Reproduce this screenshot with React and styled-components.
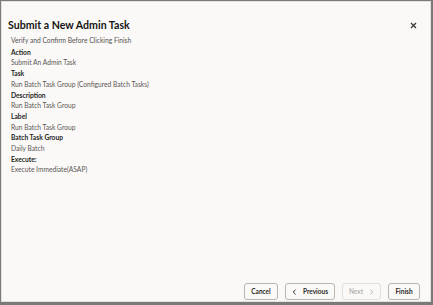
import React from "react";
import styled, { createGlobalStyle } from "styled-components";

const GlobalStyle = createGlobalStyle`
  html, body {
    margin: 0;
    padding: 0;
    background: #7a7a7a;
  }
  body {
    font-family: Lato, "Open Sans", Arial, sans-serif;
  }
`;

const Dialog = styled.div`
  box-sizing: border-box;
  margin: 1px 2px 0 1px;
  width: 430px;
  height: 301px;
  background: #faf9f8;
  border: 1px solid #e4e2df;
  display: flex;
  flex-direction: column;
`;

const Header = styled.div`
  display: flex;
  align-items: center;
  justify-content: space-between;
  padding: 16px 12px 0 6px;
`;

const Title = styled.h1`
  margin: 0;
  font-size: 10.6px;
  line-height: 14px;
  font-weight: 700;
  color: #161513;
`;

const CloseButton = styled.button`
  border: none;
  background: transparent;
  padding: 0;
  width: 10px;
  height: 10px;
  display: flex;
  align-items: center;
  justify-content: center;
  cursor: pointer;
`;

const Body = styled.div`
  flex: 1;
  padding: 3px 10px 0 9px;
  font-size: 6.7px;
  line-height: 10.7px;
`;

const Intro = styled.div`
  color: #55524e;
  margin-bottom: 1px;
`;

const Label = styled.div`
  font-weight: 700;
  color: #1f1e1c;
`;

const Value = styled.div`
  color: #5a5753;
`;

const Footer = styled.div`
  display: flex;
  justify-content: flex-end;
  gap: 7px;
  padding: 0 10px 1px 0;
`;

const Button = styled.button`
  box-sizing: border-box;
  height: 17px;
  width: ${(p) => p.w}px;
  padding: 0;
  border: 1px solid ${(p) => (p.disabled ? "#e2e0dd" : "#b9b6b2")};
  border-radius: 3px;
  background: #faf9f8;
  color: ${(p) => (p.disabled ? "#b6b3af" : "#2b2a28")};
  font-family: inherit;
  font-size: 6.5px;
  font-weight: 700;
  display: flex;
  align-items: center;
  justify-content: center;
  gap: ${(p) => p.gap || 0}px;
`;

const Chevron = ({ dir, color }) => (
  <svg width="5" height="6" viewBox="0 0 5 6">
    <path
      d={dir === "left" ? "M3.6 0.6 L1.2 3 L3.6 5.4" : "M1.4 0.6 L3.8 3 L1.4 5.4"}
      fill="none"
      stroke={color}
      strokeWidth="1"
    />
  </svg>
);

const rows = [
  ["Action", "Submit An Admin Task"],
  ["Task", "Run Batch Task Group (Configured Batch Tasks)"],
  ["Description", "Run Batch Task Group"],
  ["Label", "Run Batch Task Group"],
  ["Batch Task Group", "Daily Batch"],
  ["Execute:", "Execute Immediate(ASAP)"],
];

export default function App() {
  return (
    <>
      <GlobalStyle />
      <Dialog>
        <Header>
          <Title>Submit a New Admin Task</Title>
          <CloseButton aria-label="Close">
            <svg width="7" height="7" viewBox="0 0 7 7">
              <path d="M1 1 L6 6 M6 1 L1 6" stroke="#3a3936" strokeWidth="1.3" />
            </svg>
          </CloseButton>
        </Header>
        <Body>
          <Intro>Verify and Confirm Before Clicking Finish</Intro>
          {rows.map(([label, value]) => (
            <React.Fragment key={label}>
              <Label>{label}</Label>
              <Value>{value}</Value>
            </React.Fragment>
          ))}
        </Body>
        <Footer>
          <Button w={34}>Cancel</Button>
          <Button w={50} gap={6}>
            <Chevron dir="left" color="#2b2a28" />
            Previous
          </Button>
          <Button w={39} gap={6} disabled>
            Next
            <Chevron dir="right" color="#b6b3af" />
          </Button>
          <Button w={32}>Finish</Button>
        </Footer>
      </Dialog>
    </>
  );
}
